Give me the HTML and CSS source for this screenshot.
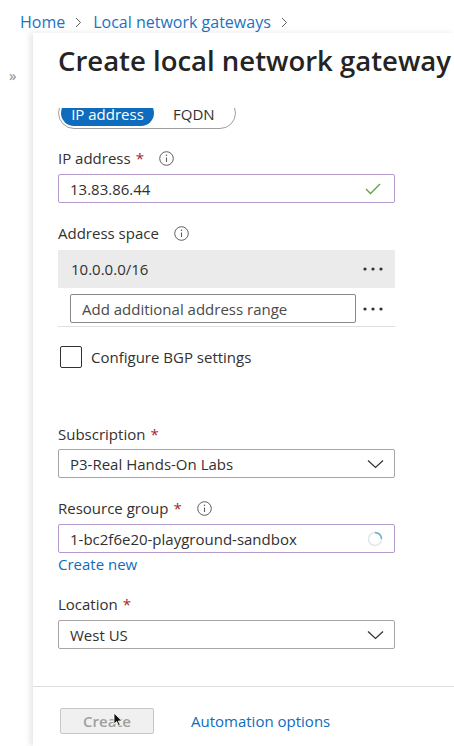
FILE: index.html
```html
<!DOCTYPE html>
<html lang="en">
<head>
<meta charset="utf-8">
<title>Create local network gateway</title>
<link rel="stylesheet" href="styles.css">
</head>
<body>
<nav class="crumbs">
  <a class="crumb">Home</a>
  <svg class="sep" width="7" height="11" viewBox="0 0 7 11"><polyline points="1,1 5.5,5.5 1,10" fill="none" stroke="#605e5c" stroke-width="1"/></svg>
  <a class="crumb">Local network gateways</a>
  <svg class="sep" width="7" height="11" viewBox="0 0 7 11"><polyline points="1,1 5.5,5.5 1,10" fill="none" stroke="#605e5c" stroke-width="1"/></svg>
</nav>
<div class="shell">
  <aside class="gutter"><span class="expand">»</span></aside>
  <section class="blade">
    <h1 class="title">Create local network gateway</h1>
    <div class="scroll">
      <div class="form">
        <div class="toggle">
          <span class="opt on">IP address</span>
          <span class="opt">FQDN</span>
        </div>

        <div class="label first">IP address<span class="req">*</span>
          <svg class="info" width="15" height="15" viewBox="0 0 15 15"><circle cx="7.5" cy="7.5" r="6.8" fill="none" stroke="#605e5c" stroke-width="1"/><line x1="7.5" y1="6.5" x2="7.5" y2="11" stroke="#605e5c" stroke-width="1.1"/><circle cx="7.5" cy="4.3" r="0.8" fill="#605e5c"/></svg>
        </div>
        <div class="input valid">
          <span class="value">13.83.86.44</span>
          <svg class="check" width="16" height="12" viewBox="0 0 16 12"><polyline points="1,6 5.5,10.5 15,1" fill="none" stroke="#5ea33b" stroke-width="1.3"/></svg>
        </div>

        <div class="label gap">Address space
          <svg class="info" width="15" height="15" viewBox="0 0 15 15"><circle cx="7.5" cy="7.5" r="6.8" fill="none" stroke="#605e5c" stroke-width="1"/><line x1="7.5" y1="6.5" x2="7.5" y2="11" stroke="#605e5c" stroke-width="1.1"/><circle cx="7.5" cy="4.3" r="0.8" fill="#605e5c"/></svg>
        </div>
        <div class="addr-row filled">
          <span class="value">10.0.0.0/16</span>
          <svg class="dots" width="20" height="4" viewBox="0 0 20 4"><circle cx="2" cy="2" r="1.6" fill="#323130"/><circle cx="10" cy="2" r="1.6" fill="#323130"/><circle cx="18" cy="2" r="1.6" fill="#323130"/></svg>
        </div>
        <div class="addr-row add">
          <div class="input small"><span class="placeholder">Add additional address range</span></div>
          <svg class="dots" width="20" height="4" viewBox="0 0 20 4"><circle cx="2" cy="2" r="1.6" fill="#323130"/><circle cx="10" cy="2" r="1.6" fill="#323130"/><circle cx="18" cy="2" r="1.6" fill="#323130"/></svg>
        </div>

        <label class="checkrow"><span class="box"></span>Configure BGP settings</label>

        <div class="label sub">Subscription<span class="req">*</span></div>
        <div class="input select">
          <span class="value">P3-Real Hands-On Labs</span>
          <svg class="chev" width="17" height="10" viewBox="0 0 17 10"><polyline points="1,1.5 8.5,8.5 16,1.5" fill="none" stroke="#323130" stroke-width="1.2"/></svg>
        </div>

        <div class="label gap">Resource group<span class="req">*</span>
          <svg class="info" width="15" height="15" viewBox="0 0 15 15"><circle cx="7.5" cy="7.5" r="6.8" fill="none" stroke="#605e5c" stroke-width="1"/><line x1="7.5" y1="6.5" x2="7.5" y2="11" stroke="#605e5c" stroke-width="1.1"/><circle cx="7.5" cy="4.3" r="0.8" fill="#605e5c"/></svg>
        </div>
        <div class="input valid">
          <span class="value">1-bc2f6e20-playground-sandbox</span>
          <svg class="spin" width="16" height="16" viewBox="0 0 16 16"><circle cx="8" cy="8" r="6.5" fill="none" stroke="#e6e6e6" stroke-width="1.5"/><path d="M8 1.5 A6.5 6.5 0 0 1 14.5 8" fill="none" stroke="#6aaed0" stroke-width="1.5"/></svg>
        </div>
        <a class="link create-new">Create new</a>

        <div class="label gap">Location<span class="req">*</span></div>
        <div class="input select">
          <span class="value">West US</span>
          <svg class="chev" width="17" height="10" viewBox="0 0 17 10"><polyline points="1,1.5 8.5,8.5 16,1.5" fill="none" stroke="#323130" stroke-width="1.2"/></svg>
        </div>
      </div>
    </div>
    <footer class="footer">
      <button class="btn" disabled>Create
        <svg class="cursor" width="10" height="15" viewBox="0 0 10 15"><path d="M1 1 L1 12 L3.6 9.6 L5.6 14 L7.2 13.3 L5.3 9 L8.8 9 Z" fill="#111" stroke="#fff" stroke-width="0.8"/></svg>
      </button>
      <a class="link automation">Automation options</a>
    </footer>
  </section>
</div>
</body>
</html>
```
FILE: styles.css
```css
* { box-sizing: border-box; }
html, body { margin: 0; padding: 0; }
body {
  width: 454px;
  height: 746px;
  overflow: hidden;
  background: #fff;
  color: #323130;
  font-family: "Open Sans", "Noto Sans", sans-serif;
}
.crumbs {
  height: 33px;
  padding: 11px 0 0 20px;
  display: flex;
  align-items: center;
  font-size: 16px;
  line-height: 22px;
  color: #1a73c0;
}
.crumbs .crumb { white-space: nowrap; }
.crumbs .sep { margin: 0 11px 0 10px; }
.shell {
  display: flex;
  height: 713px;
}
.gutter {
  width: 33px;
  flex: none;
  padding-top: 31px;
  padding-left: 9px;
}
.expand {
  color: #8a8886;
  font-size: 15px;
  line-height: 20px;
}
.blade {
  flex: 1;
  min-width: 0;
  display: flex;
  flex-direction: column;
  background: #fff;
  box-shadow: -3px 0 6px rgba(0,0,0,0.10);
}
.title {
  margin: 0;
  height: 75px;
  flex: none;
  padding: 10px 0 0 25px;
  font-size: 27.5px;
  line-height: 36px;
  font-weight: 600;
  white-space: nowrap;
  overflow: hidden;
  color: #242424;
}
.scroll {
  flex: 1;
  overflow: hidden;
  padding: 0 59px 0 25px;
}
.form {
  font-size: 15px;
  line-height: 20px;
}
.toggle {
  margin-top: -11px;
  width: 178px;
  height: 32px;
  border: 1px solid #a19f9d;
  border-radius: 16px;
  padding: 2px;
  display: flex;
}
.opt {
  height: 26px;
  line-height: 26px;
  padding-top: 1px;
  font-size: 15px;
}
.opt.on {
  width: 93px;
  text-align: center;
  background: #0f6cbd;
  color: #fff;
  border-radius: 13px;
}
.opt + .opt { padding-left: 19px; }
.label {
  display: flex;
  align-items: center;
  height: 20px;
  margin-bottom: 6px;
}
.label.first { margin-top: 19px; }
.label.gap { margin-top: 20px; }
.label.sub { margin-top: 56px; margin-bottom: 5px; }
.req {
  color: #a4262c;
  margin-left: 5px;
}
.info { margin-left: 15px; }
.input {
  height: 29px;
  border: 1px solid #8a8886;
  border-radius: 2px;
  padding: 0 10px 0 11px;
  display: flex;
  align-items: center;
  justify-content: space-between;
}
.input.valid { border-color: #b49bcc; }
.input.select { border-color: #a8a6a4; }
.value { white-space: nowrap; }
.check { margin-right: 3px; }
.spin { margin-right: 1px; }
.addr-row {
  display: flex;
  align-items: center;
  justify-content: space-between;
  padding-right: 12px;
}
.addr-row.filled {
  height: 38px;
  margin-top: 7px;
  background: #ebebeb;
  padding-left: 13px;
}
.addr-row.add {
  padding: 6px 12px 3px 12px;
  border-bottom: 1px solid #e1dfdd;
}
.input.small { width: 286px; }
.placeholder { color: #4a4a4a; }
.checkrow {
  display: flex;
  align-items: center;
  margin-top: 19px;
  height: 22px;
  padding-left: 2px;
}
.box {
  width: 22px;
  height: 22px;
  border: 1px solid #323130;
  border-radius: 2px;
  margin-right: 9px;
}
.link {
  color: #0f6cbd;
  white-space: nowrap;
}
.create-new {
  display: block;
  margin-top: 1px;
  font-size: 15px;
  line-height: 20px;
}
.footer {
  height: 60px;
  flex: none;
  border-top: 1px solid #e1dfdd;
  display: flex;
  align-items: flex-start;
  padding: 21px 0 0 27px;
}
.btn {
  position: relative;
  width: 94px;
  height: 26px;
  background: #f0f0f0;
  border: 1px solid #c8c6c4;
  border-radius: 2px;
  color: #a19f9d;
  font-family: inherit;
  font-size: 15px;
  font-weight: 600;
  padding: 0;
}
.cursor {
  position: absolute;
  left: 52px;
  top: 3px;
}
.automation {
  margin-left: 37px;
  font-size: 15px;
  line-height: 26px;
}
```
